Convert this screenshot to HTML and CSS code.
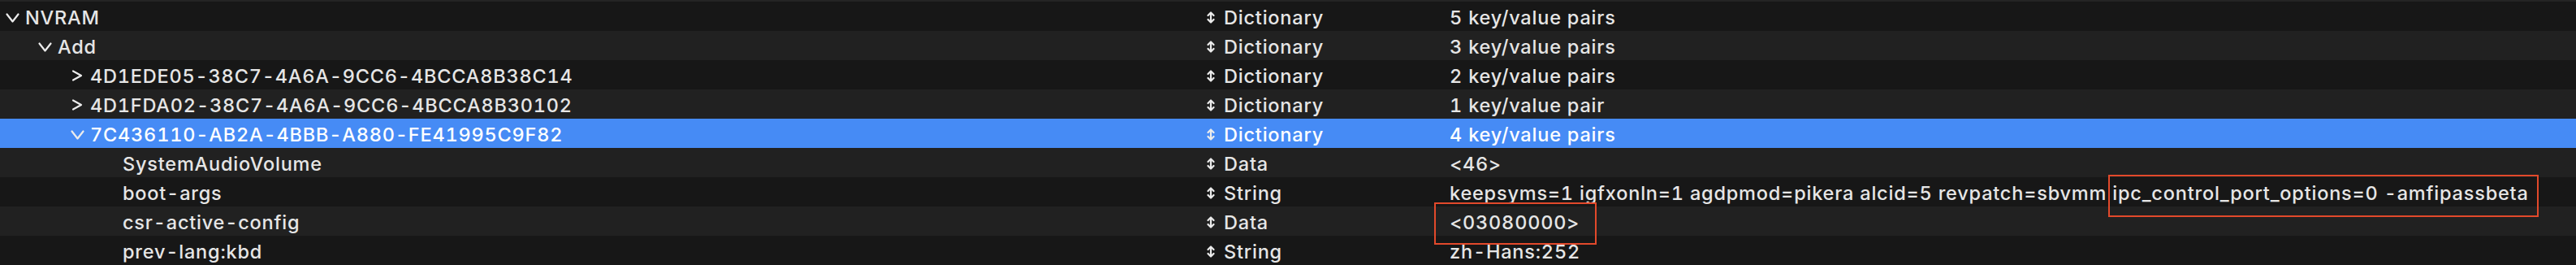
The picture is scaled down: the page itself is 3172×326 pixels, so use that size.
FILE: index.html
```html
<!DOCTYPE html>
<html lang="en">
<head>
    <meta charset="UTF-8">
    <meta name="viewport" content="width=device-width, initial-scale=1.0">
    <title>NVRAM</title>
    <link rel="stylesheet" href="styles.css">
</head>
<body>
    <div class="outline">
        <div class="edge"></div>

        <div class="row">
            <div class="key lvl-0">
                <span class="disclosure"><svg class="chev-open" viewBox="0 0 17 12"><polyline points="1.5,1.5 8.5,10.5 15.5,1.5"/></svg></span>
                <span>NVRAM</span>
            </div>
            <div class="type"><svg class="updown" viewBox="0 0 10 15"><polyline points="1.5,5 5,1.5 8.5,5"/><polyline points="1.5,10 5,13.5 8.5,10"/><line x1="5" y1="2" x2="5" y2="13"/></svg>Dictionary</div>
            <div class="value">5 key/value pairs</div>
        </div>

        <div class="row">
            <div class="key lvl-1">
                <span class="disclosure"><svg class="chev-open" viewBox="0 0 17 12"><polyline points="1.5,1.5 8.5,10.5 15.5,1.5"/></svg></span>
                <span>Add</span>
            </div>
            <div class="type"><svg class="updown" viewBox="0 0 10 15"><polyline points="1.5,5 5,1.5 8.5,5"/><polyline points="1.5,10 5,13.5 8.5,10"/><line x1="5" y1="2" x2="5" y2="13"/></svg>Dictionary</div>
            <div class="value">3 key/value pairs</div>
        </div>

        <div class="row">
            <div class="key lvl-2">
                <span class="disclosure"><svg class="chev-closed" viewBox="0 0 14 14"><polyline points="2,1.5 12,7 2,12.5"/></svg></span>
                <span>4D1EDE05-38C7-4A6A-9CC6-4BCCA8B38C14</span>
            </div>
            <div class="type"><svg class="updown" viewBox="0 0 10 15"><polyline points="1.5,5 5,1.5 8.5,5"/><polyline points="1.5,10 5,13.5 8.5,10"/><line x1="5" y1="2" x2="5" y2="13"/></svg>Dictionary</div>
            <div class="value">2 key/value pairs</div>
        </div>

        <div class="row">
            <div class="key lvl-2">
                <span class="disclosure"><svg class="chev-closed" viewBox="0 0 14 14"><polyline points="2,1.5 12,7 2,12.5"/></svg></span>
                <span>4D1FDA02-38C7-4A6A-9CC6-4BCCA8B30102</span>
            </div>
            <div class="type"><svg class="updown" viewBox="0 0 10 15"><polyline points="1.5,5 5,1.5 8.5,5"/><polyline points="1.5,10 5,13.5 8.5,10"/><line x1="5" y1="2" x2="5" y2="13"/></svg>Dictionary</div>
            <div class="value">1 key/value pair</div>
        </div>

        <div class="row selected">
            <div class="key lvl-2">
                <span class="disclosure"><svg class="chev-open" viewBox="0 0 17 12"><polyline points="1.5,1.5 8.5,10.5 15.5,1.5"/></svg></span>
                <span>7C436110-AB2A-4BBB-A880-FE41995C9F82</span>
            </div>
            <div class="type"><svg class="updown" viewBox="0 0 10 15"><polyline points="1.5,5 5,1.5 8.5,5"/><polyline points="1.5,10 5,13.5 8.5,10"/><line x1="5" y1="2" x2="5" y2="13"/></svg>Dictionary</div>
            <div class="value">4 key/value pairs</div>
        </div>

        <div class="row">
            <div class="key lvl-3">
                <span class="disclosure"></span>
                <span>SystemAudioVolume</span>
            </div>
            <div class="type"><svg class="updown" viewBox="0 0 10 15"><polyline points="1.5,5 5,1.5 8.5,5"/><polyline points="1.5,10 5,13.5 8.5,10"/><line x1="5" y1="2" x2="5" y2="13"/></svg>Data</div>
            <div class="value">&lt;46&gt;</div>
        </div>

        <div class="row">
            <div class="key lvl-3">
                <span class="disclosure"></span>
                <span>boot-args</span>
            </div>
            <div class="type"><svg class="updown" viewBox="0 0 10 15"><polyline points="1.5,5 5,1.5 8.5,5"/><polyline points="1.5,10 5,13.5 8.5,10"/><line x1="5" y1="2" x2="5" y2="13"/></svg>String</div>
            <div class="value">keepsyms=1 igfxonln=1 agdpmod=pikera alcid=5 revpatch=sbvmm&nbsp;<span class="callout callout-args">ipc_control_port_options=0 -amfipassbeta</span></div>
        </div>

        <div class="row">
            <div class="key lvl-3">
                <span class="disclosure"></span>
                <span>csr-active-config</span>
            </div>
            <div class="type"><svg class="updown" viewBox="0 0 10 15"><polyline points="1.5,5 5,1.5 8.5,5"/><polyline points="1.5,10 5,13.5 8.5,10"/><line x1="5" y1="2" x2="5" y2="13"/></svg>Data</div>
            <div class="value"><span class="callout callout-csr">&lt;03080000&gt;</span></div>
        </div>

        <div class="row">
            <div class="key lvl-3">
                <span class="disclosure"></span>
                <span>prev-lang:kbd</span>
            </div>
            <div class="type"><svg class="updown" viewBox="0 0 10 15"><polyline points="1.5,5 5,1.5 8.5,5"/><polyline points="1.5,10 5,13.5 8.5,10"/><line x1="5" y1="2" x2="5" y2="13"/></svg>String</div>
            <div class="value">zh-Hans:252</div>
        </div>
    </div>
</body>
</html>
```

FILE: styles.css
```css
/* plist outline, dark mode */
body {
    margin: 0;
    background: #171717;
    color: #e6e6e6;
    font-family: 'Inter', 'Liberation Sans', sans-serif;
    font-size: 23.5px;
    font-weight: 500;
    letter-spacing: 0.8px;
    font-variant-numeric: tabular-nums;
}

.outline {
    width: 3172px;
}

.edge {
    height: 2px;
    background: #242424;
}

.row {
    display: grid;
    grid-template-columns: 1479px 306px 1fr;
    height: 36px;
    line-height: 36px;
    white-space: nowrap;
    background: #171717;
}

.row:nth-child(odd) {
    background: #212121;
}

.row.selected {
    background: #468bf5;
    color: #ffffff;
}

.key,
.type,
.value {
    display: flex;
    align-items: center;
    padding-top: 2px;
    box-sizing: border-box;
}

.lvl-0 { padding-left: 7px; }
.lvl-1 { padding-left: 47px; }
.lvl-2 { padding-left: 87px; }
.lvl-3 { padding-left: 127px; }

.disclosure {
    display: flex;
    align-items: center;
    width: 24px;
    flex: none;
    height: 36px;
    margin-top: -2px;
}

.disclosure svg {
    fill: none;
    stroke: #ececec;
    stroke-width: 2.2;
    stroke-linecap: round;
    stroke-linejoin: round;
}

.chev-open {
    width: 17px;
    height: 12px;
    margin-top: 2px;
}

.chev-closed {
    width: 14px;
    height: 14px;
    margin-left: 1px;
}

.type {
    padding-left: 7px;
}

.updown {
    width: 10px;
    height: 15px;
    margin-right: 11px;
    margin-top: -1px;
    flex: none;
    fill: none;
    stroke: #ececec;
    stroke-width: 2.2;
    stroke-linecap: round;
    stroke-linejoin: round;
}

.callout {
    position: relative;
}

.callout::after {
    content: '';
    position: absolute;
    border: 2px solid #e2492b;
}

.callout-args::after {
    left: -5px;
    right: -12px;
    top: -5px;
    bottom: -11px;
}

.callout-csr::after {
    left: -19px;
    right: -21px;
    top: -7px;
    bottom: -9px;
}
```
